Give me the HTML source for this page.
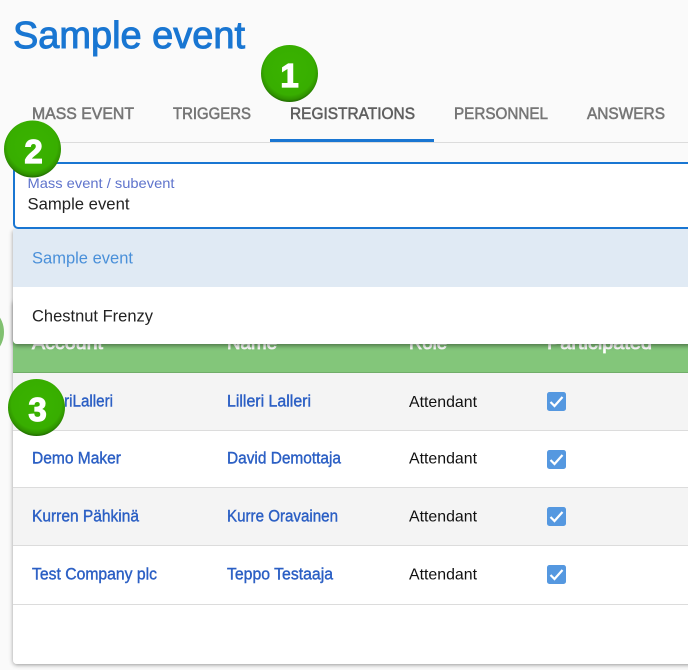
<!DOCTYPE html>
<html><head><meta charset="utf-8"><title>Sample event</title>
<style>
html,body{margin:0;padding:0;width:688px;height:670px;overflow:hidden;background:#fafafa}
svg{display:block}
text{font-family:"Liberation Sans",sans-serif}
.t{font-size:16.5px;fill:#767676;stroke:#767676;stroke-width:.55px}
.l{font-size:16.5px;fill:#2b5fc4;stroke:#2b5fc4;stroke-width:.4px}
.a{font-size:16px;fill:#111}
.o{font-size:16.5px}
.h{font-size:18.5px;fill:#fff;stroke:#fff;stroke-width:.8px}
.n{font-size:33px;font-weight:bold;fill:#fff;stroke:#fff;stroke-width:1.2px;text-anchor:middle}
.c{fill:none;stroke:#fff;stroke-width:2.2px}
</style></head><body>
<svg width="688" height="670" viewBox="0 0 688 670" xmlns="http://www.w3.org/2000/svg">
<defs>
<radialGradient id="g" cx="50%" cy="44%" r="56%">
<stop offset="0" stop-color="#3ab300"/><stop offset=".78" stop-color="#38ae00"/><stop offset=".92" stop-color="#2f9200"/><stop offset="1" stop-color="#1f6a00"/>
</radialGradient>
<filter id="s1" x="-5%" y="-5%" width="110%" height="110%"><feDropShadow dx="0" dy="1" stdDeviation="2" flood-color="#000" flood-opacity=".4"/></filter>
<filter id="s2" x="-5%" y="-5%" width="110%" height="115%"><feDropShadow dx="0" dy="2" stdDeviation="2" flood-color="#000" flood-opacity=".4"/></filter>
</defs>
<rect width="688" height="670" fill="#fafafa"/>
<text x="13" y="48" font-size="38" fill="#1976d2" stroke="#1976d2" stroke-width="1" textLength="232" lengthAdjust="spacingAndGlyphs">Sample event</text>

<text class="t" x="32" y="119" textLength="102" lengthAdjust="spacingAndGlyphs">MASS EVENT</text>
<text class="t" x="173" y="119" textLength="78" lengthAdjust="spacingAndGlyphs">TRIGGERS</text>
<text class="t" x="290" y="119" textLength="125" lengthAdjust="spacingAndGlyphs" style="fill:#5f5f5f;stroke:#5f5f5f">REGISTRATIONS</text>
<text class="t" x="454" y="119" textLength="94" lengthAdjust="spacingAndGlyphs">PERSONNEL</text>
<text class="t" x="587" y="119" textLength="78" lengthAdjust="spacingAndGlyphs">ANSWERS</text>
<rect x="13" y="142" width="675" height="1" fill="#dcdcdc"/>
<rect x="270" y="139" width="164" height="3" fill="#1976d2"/>

<circle cx="-24" cy="332" r="28" fill="#80c070"/>

<!-- card -->
<rect x="13" y="300" width="700" height="364" rx="4" fill="#fff" filter="url(#s1)"/>
<rect x="13" y="330" width="675" height="42" fill="#83c67a"/>
<rect x="13" y="372" width="675" height="1" fill="#71ad69"/>
<text class="h" x="32" y="349" textLength="71" lengthAdjust="spacingAndGlyphs">Account</text>
<text class="h" x="227" y="349" textLength="50" lengthAdjust="spacingAndGlyphs">Name</text>
<text class="h" x="409" y="349" textLength="38" lengthAdjust="spacingAndGlyphs">Role</text>
<text class="h" x="547" y="349" textLength="105" lengthAdjust="spacingAndGlyphs">Participated</text>

<rect x="13" y="373" width="675" height="57" fill="#f4f4f4"/>
<rect x="13" y="430" width="675" height="1" fill="#dcdcdc"/>
<rect x="13" y="488" width="675" height="57" fill="#f4f4f4"/>
<rect x="13" y="487" width="675" height="1" fill="#dcdcdc"/>
<rect x="13" y="545" width="675" height="1" fill="#dcdcdc"/>
<rect x="13" y="604" width="675" height="1" fill="#dcdcdc"/>

<text class="l" x="32" y="406.500" textLength="81" lengthAdjust="spacingAndGlyphs">LalleriLalleri</text>
<text class="l" x="227" y="406.500" textLength="84" lengthAdjust="spacingAndGlyphs">Lilleri Lalleri</text>
<text class="a" x="409" y="407" textLength="68" lengthAdjust="spacingAndGlyphs">Attendant</text>
<text class="l" x="32" y="463.500" textLength="89" lengthAdjust="spacingAndGlyphs">Demo Maker</text>
<text class="l" x="227" y="463.500" textLength="114" lengthAdjust="spacingAndGlyphs">David Demottaja</text>
<text class="a" x="409" y="463.500" textLength="68" lengthAdjust="spacingAndGlyphs">Attendant</text>
<text class="l" x="32" y="521.500" textLength="107" lengthAdjust="spacingAndGlyphs">Kurren Pähkinä</text>
<text class="l" x="227" y="521.500" textLength="111" lengthAdjust="spacingAndGlyphs">Kurre Oravainen</text>
<text class="a" x="409" y="521.500" textLength="68" lengthAdjust="spacingAndGlyphs">Attendant</text>
<text class="l" x="32" y="579.500" textLength="125" lengthAdjust="spacingAndGlyphs">Test Company plc</text>
<text class="l" x="227" y="579.500" textLength="106" lengthAdjust="spacingAndGlyphs">Teppo Testaaja</text>
<text class="a" x="409" y="579.500" textLength="68" lengthAdjust="spacingAndGlyphs">Attendant</text>

<g>
<rect x="547" y="392" width="19" height="19" rx="2.500" fill="#5598e0"/><path class="c" d="M550.500 402l4 4 8-9"/>
<rect x="547" y="450" width="19" height="19" rx="2.500" fill="#5598e0"/><path class="c" d="M550.500 460l4 4 8-9"/>
<rect x="547" y="507" width="19" height="19" rx="2.500" fill="#5598e0"/><path class="c" d="M550.500 517l4 4 8-9"/>
<rect x="547" y="565" width="19" height="19" rx="2.500" fill="#5598e0"/><path class="c" d="M550.500 575l4 4 8-9"/>
</g>

<!-- dropdown -->
<path d="M13 229H700V344H17a4 4 0 0 1-4-4Z" fill="#fff" filter="url(#s2)"/>
<rect x="13" y="229" width="675" height="58" fill="#e0eaf4"/>
<text class="o" x="32" y="263.500" fill="#4a90d9" textLength="101" lengthAdjust="spacingAndGlyphs">Sample event</text>
<text class="o" x="32" y="321.500" fill="#222" textLength="121" lengthAdjust="spacingAndGlyphs">Chestnut Frenzy</text>

<!-- field -->
<path d="M700 163H18a4 4 0 0 0-4 4V224a4 4 0 0 0 4 4H700Z" fill="#fff" stroke="#1976d2" stroke-width="2"/>
<text x="27.500" y="188" font-size="14" fill="#5f74cc" textLength="147" lengthAdjust="spacingAndGlyphs">Mass event / subevent</text>
<text class="o" x="27.500" y="209.500" fill="#222" textLength="102" lengthAdjust="spacingAndGlyphs">Sample event</text>

<!-- badges -->
<circle cx="289.500" cy="73.500" r="28.500" fill="url(#g)"/>
<text class="n" x="289.500" y="87">1</text>
<circle cx="32.500" cy="149" r="28.500" fill="url(#g)"/>
<text class="n" x="33.500" y="163">2</text>
<circle cx="36.500" cy="407.500" r="28.500" fill="url(#g)"/>
<text class="n" x="37.500" y="421">3</text>
</svg>
</body></html>
